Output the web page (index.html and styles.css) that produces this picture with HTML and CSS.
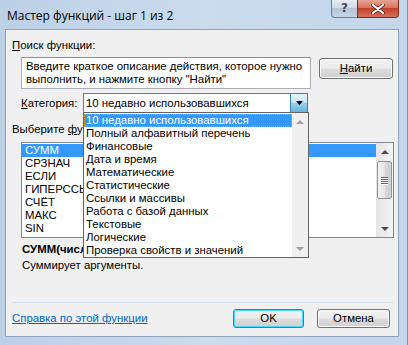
FILE: index.html
```html
<!DOCTYPE html>
<html lang="ru">
<head>
    <meta charset="UTF-8">
    <title>Мастер функций</title>
    <link rel="stylesheet" href="styles.css">
</head>
<body>
    <div class="window">
        <div class="titlebar">
            <span class="title">Мастер функций - шаг 1 из 2</span>
            <div class="caption-buttons">
                <span class="cap-btn help">?</span>
                <span class="cap-btn close">
                    <svg width="14" height="10" viewBox="0 0 14 10">
                        <path d="M2 1 L12 9 M12 1 L2 9" stroke="#5a2418" stroke-width="3.6" stroke-linecap="round"/>
                        <path d="M2 1 L12 9 M12 1 L2 9" stroke="#fff" stroke-width="2.2" stroke-linecap="round"/>
                    </svg>
                </span>
            </div>
        </div>
        <div class="client">
            <div class="label top-label"><u>П</u>оиск функции:</div>
            <div class="search-row">
                <div class="search-box">Введите краткое описание действия, которое нужно выполнить, и нажмите кнопку "Найти"</div>
                <div class="btn find"><u>Н</u>айти</div>
            </div>
            <div class="category-row">
                <span class="label cat-label"><u>К</u>атегория:</span>
                <div class="combo">
                    <span class="combo-text">10 недавно использовавшихся</span>
                    <span class="combo-btn">
                        <svg width="7" height="4" viewBox="0 0 7 4"><path d="M0 0 H7 L3.5 4 Z" fill="#000"/></svg>
                    </span>
                </div>
            </div>
            <div class="label pick-label">Выберите <u>ф</u>ункцию:</div>
            <div class="listbox">
                <div class="list-items">
                    <div class="item selected">СУММ</div>
                    <div class="item">СРЗНАЧ</div>
                    <div class="item">ЕСЛИ</div>
                    <div class="item">ГИПЕРССЫЛКА</div>
                    <div class="item">СЧЁТ</div>
                    <div class="item">МАКС</div>
                    <div class="item">SIN</div>
                </div>
                <div class="vscroll">
                    <span class="arrow up"></span>
                    <div class="track">
                        <div class="thumb">
                            <span class="grip"></span>
                            <span class="grip"></span>
                            <span class="grip"></span>
                            <span class="grip"></span>
                        </div>
                    </div>
                    <span class="arrow down"></span>
                </div>
            </div>
            <div class="signature">СУММ(число1;число2;...)</div>
            <div class="desc">Суммирует аргументы.</div>
            <div class="sep"></div>
            <div class="footer">
                <span class="help-link">Справка по этой функции</span>
                <div class="btn ok">OK</div>
                <div class="btn cancel">Отмена</div>
            </div>

            <div class="dropdown">
                <div class="drop-items">
                    <div class="drop-item focused">10 недавно использовавшихся</div>
                    <div class="drop-item">Полный алфавитный перечень</div>
                    <div class="drop-item">Финансовые</div>
                    <div class="drop-item">Дата и время</div>
                    <div class="drop-item">Математические</div>
                    <div class="drop-item">Статистические</div>
                    <div class="drop-item">Ссылки и массивы</div>
                    <div class="drop-item">Работа с базой данных</div>
                    <div class="drop-item">Текстовые</div>
                    <div class="drop-item">Логические</div>
                    <div class="drop-item">Проверка свойств и значений</div>
                </div>
                <div class="vscroll light">
                    <span class="arrow up"></span>
                    <div class="track"></div>
                    <span class="arrow down"></span>
                </div>
            </div>
        </div>
    </div>
</body>
</html>
```

FILE: styles.css
```css
body {
    margin: 0;
    background: #b9cde3;
    font-family: "Liberation Sans", Arial, sans-serif;
    font-size: 11.4px;
    line-height: 13px;
    color: #000;
}
u {
    text-decoration: underline;
    text-underline-offset: 1px;
}
.window {
    width: 408px;
    height: 345px;
    box-sizing: border-box;
    padding: 0 8px 8px 5px;
    background: linear-gradient(to right, #bcd0e6 0%, #cadcee 50%, #c3d6ea 100%);
    border-right: 1px solid #7e93ab;
    display: flex;
    flex-direction: column;
}
.titlebar {
    height: 29px;
    display: flex;
    justify-content: space-between;
    align-items: flex-start;
}
.title {
    font-family: "Open Sans", "Liberation Sans", sans-serif;
    font-size: 12px;
    line-height: 16px;
    margin: 8px 0 0 2px;
    color: #000;
}
.caption-buttons {
    display: flex;
    margin-right: 0;
}
.cap-btn {
    height: 18px;
    display: flex;
    align-items: center;
    justify-content: center;
    border: 1px solid #6d7e92;
    border-top: none;
    box-sizing: border-box;
}
.help {
    width: 26px;
    border-radius: 0 0 0 4px;
    border-right: none;
    background: linear-gradient(#e6edf5 0%, #cfdbe8 45%, #b4c5d8 50%, #c8d6e5 100%);
    color: #3e4c5d;
    font-family: "DejaVu Sans", sans-serif;
    font-weight: bold;
    font-size: 12px;
}
.close {
    width: 42px;
    border-radius: 0 0 4px 0;
    background: linear-gradient(#e7a596 0%, #d7745f 45%, #c2432a 50%, #d6705a 100%);
    border-color: #7a2c1e;
}
.client {
    position: relative;
    flex: 1;
    background: #f0f0f0;
    border: 1px solid #8fa3ba;
    box-sizing: border-box;
    padding: 0 0 0 6px;
}
.label {
    white-space: nowrap;
}
.top-label {
    margin-top: 9px;
}
.search-row {
    display: flex;
    align-items: flex-start;
    margin: 5px 0 0 9px;
}
.search-box {
    width: 290px;
    height: 32px;
    box-sizing: border-box;
    background: #fff;
    border: 1px solid #abadb3;
    border-top-color: #8e8f8f;
    padding: 2px 4px;
    line-height: 13px;
}
.btn {
    box-sizing: border-box;
    display: flex;
    align-items: center;
    justify-content: center;
    border: 1px solid #707070;
    border-radius: 3px;
    background: linear-gradient(#f2f2f2 0%, #ebebeb 48%, #dddddd 52%, #cfcfcf 100%);
    box-shadow: inset 0 0 0 1px #fcfcfc;
}
.find {
    width: 74px;
    height: 21px;
    margin: 1px 0 0 8px;
}
.category-row {
    display: flex;
    align-items: center;
    margin: 4px 0 0 9px;
}
.cat-label {
    width: 62px;
}
.combo {
    width: 225px;
    height: 20px;
    box-sizing: border-box;
    background: #fff;
    border: 1px solid #7a7a7a;
    display: flex;
    align-items: stretch;
}
.combo-text {
    flex: 1;
    padding: 3px 0 0 2px;
    white-space: nowrap;
    overflow: hidden;
}
.combo-btn {
    width: 16px;
    display: flex;
    align-items: center;
    justify-content: center;
    border: 1px solid #3c7fb1;
    margin: -1px -1px -1px 0;
    background: linear-gradient(#e5f4fc 0%, #c4e5f6 48%, #98d1ef 52%, #68b3db 100%);
}
.pick-label {
    margin-top: 10px;
}
.listbox {
    width: 373px;
    height: 96px;
    box-sizing: border-box;
    margin: 6px 0 0 9px;
    background: #fff;
    border: 1px solid #828790;
    display: flex;
}
.list-items {
    flex: 1;
    padding-top: 1px;
}
.item {
    height: 13px;
    padding-left: 3px;
    white-space: nowrap;
}
.item.selected {
    background: #3399ff;
    color: #fff;
}
.vscroll {
    width: 17px;
    display: flex;
    flex-direction: column;
    background: linear-gradient(to right, #e5e5e5, #f3f3f3);
}
.arrow {
    height: 17px;
    display: flex;
    align-items: center;
    justify-content: center;
}
.arrow::after {
    content: '';
    border-left: 4px solid transparent;
    border-right: 4px solid transparent;
}
.arrow.up::after {
    border-bottom: 4px solid #4d4d4d;
}
.arrow.down::after {
    border-top: 4px solid #4d4d4d;
}
.track {
    flex: 1;
    display: flex;
    flex-direction: column;
    padding-top: 1px;
}
.thumb {
    height: 38px;
    margin: 0 1px;
    box-sizing: border-box;
    border: 1px solid #959595;
    border-radius: 2px;
    background: linear-gradient(to right, #f2f2f2, #e6e6e6 50%, #d6d6d6 51%, #cfcfcf);
    display: flex;
    flex-direction: column;
    justify-content: center;
    align-items: center;
    gap: 1px;
}
.grip {
    width: 7px;
    height: 1px;
    background: #5f5f5f;
    box-shadow: 0 1px 0 #fff;
}
.signature {
    font-weight: bold;
    margin: 5px 0 0 10px;
}
.desc {
    margin: 3px 0 0 10px;
}
.sep {
    height: 0;
    width: 381px;
    border-top: 1px solid #d5dfe5;
    margin-top: 30px;
}
.footer {
    display: flex;
    align-items: center;
    margin-top: 6px;
}
.help-link {
    color: #0066cc;
    text-decoration: underline;
    margin-right: auto;
}
.ok, .cancel {
    height: 19px;
}
.ok {
    width: 71px;
    border-color: #3c7fb1;
    box-shadow: inset 0 0 0 1px #48d8fb;
}
.cancel {
    width: 73px;
    margin: 0 8px 0 13px;
}
.dropdown {
    position: absolute;
    left: 77px;
    top: 82px;
    width: 226px;
    height: 146px;
    box-sizing: border-box;
    border: 1px solid #646464;
    background: #fff;
    display: flex;
}
.drop-items {
    flex: 1;
    padding-top: 1px;
}
.drop-item {
    height: 13px;
    padding-left: 2px;
    white-space: nowrap;
    overflow: hidden;
}
.drop-item.focused {
    background: #3399ff;
    color: #fff;
    outline: 1px dotted #f0a030;
    outline-offset: -1px;
}
.vscroll.light {
    width: 16px;
    background: #f0f0f0;
}
.vscroll.light .arrow.up::after {
    border-bottom-color: #a0a0a0;
}
.vscroll.light .arrow.down::after {
    border-top-color: #a0a0a0;
}
```
